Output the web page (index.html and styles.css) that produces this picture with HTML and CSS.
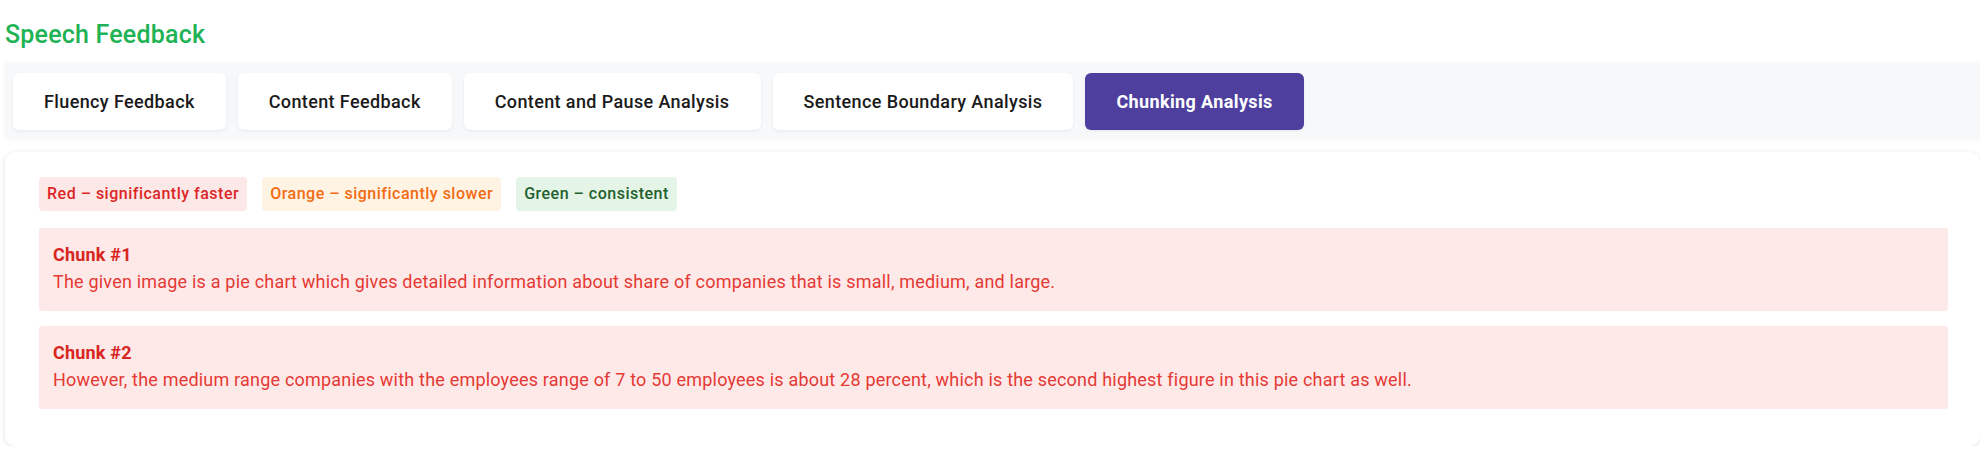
FILE: index.html
```html
<!DOCTYPE html>
<html lang="en">
<head>
<meta charset="utf-8">
<title>Speech Feedback</title>
<link rel="stylesheet" href="styles.css">
</head>
<body>
<div class="page">
  <h2 class="title">Speech Feedback</h2>
  <div class="tabbar">
    <button class="tab">Fluency Feedback</button>
    <button class="tab">Content Feedback</button>
    <button class="tab">Content and Pause Analysis</button>
    <button class="tab">Sentence Boundary Analysis</button>
    <button class="tab tab-active">Chunking Analysis</button>
  </div>
  <div class="card">
    <div class="legend">
      <span class="pill pill-red">Red – significantly faster</span>
      <span class="pill pill-orange">Orange – significantly slower</span>
      <span class="pill pill-green">Green – consistent</span>
    </div>
    <div class="chunk">
      <div class="chunk-title">Chunk #1</div>
      <div class="chunk-text">The given image is a pie chart which gives detailed information about share of companies that is small, medium, and large.</div>
    </div>
    <div class="chunk">
      <div class="chunk-title">Chunk #2</div>
      <div class="chunk-text">However, the medium range companies with the employees range of 7 to 50 employees is about 28 percent, which is the second highest figure in this pie chart as well.</div>
    </div>
  </div>
</div>
</body>
</html>
```
FILE: styles.css
```css
* { box-sizing: border-box; }
html, body { margin: 0; padding: 0; background: #ffffff; }
body { font-family: Roboto, "Liberation Sans", Arial, sans-serif; color: #222; }
.page { padding: 0 0 0 5px; width: 1980px; }
.title {
  margin: 0;
  height: 63px;
  padding-top: 20px;
  font-size: 25px;
  line-height: 30px;
  font-weight: 500;
  letter-spacing: 0.2px;
  color: #1fb356;
}
.tabbar {
  display: flex;
  gap: 12px;
  height: 75px;
  padding: 10px 8px 8px 8px;
  background: #f7f8fa;
  box-shadow: 0 1px 6px rgba(0,0,0,0.04);
  margin-right: -5px;
}
.tab {
  height: 57px;
  padding: 0 31px;
  border: none;
  border-radius: 6px;
  background: #ffffff;
  box-shadow: 0 1px 3px rgba(0,0,0,0.07);
  font-family: Roboto, "Liberation Sans", Arial, sans-serif;
  font-size: 18px;
  font-weight: 500;
  letter-spacing: 0.38px;
  color: #1a1a1a;
}
.tab-active {
  background: #4e3f9e;
  color: #ffffff;
  font-weight: 700;
}
.card {
  margin-top: 14px;
  height: 294px;
  padding: 25px 32px 37px 34px;
  background: #ffffff;
  border-radius: 10px;
  box-shadow: 0 1px 5px rgba(0,0,0,0.12);
}
.legend {
  display: flex;
  gap: 15px;
  margin-bottom: 17px;
}
.pill {
  height: 34px;
  line-height: 34px;
  padding: 0 8px;
  border-radius: 4px;
  font-size: 16px;
  font-weight: 500;
  letter-spacing: 0.5px;
}
.pill-red { background: #fde8e8; color: #dc2626; }
.pill-orange { background: #fff3e3; color: #f26b12; }
.pill-green { background: #e4f4e7; color: #22602e; }
.chunk {
  background: #fde9e8;
  border-radius: 3px;
  padding: 15px 14px 14px 14px;
  margin-bottom: 15px;
  color: #e53935;
  letter-spacing: 0.2px;
}
.chunk:last-child { margin-bottom: 0; }
.chunk-title {
  font-size: 18px;
  font-weight: 700;
  line-height: 24px;
  color: #d9251f;
}
.chunk-text {
  font-size: 18px;
  line-height: 30px;
}
```
